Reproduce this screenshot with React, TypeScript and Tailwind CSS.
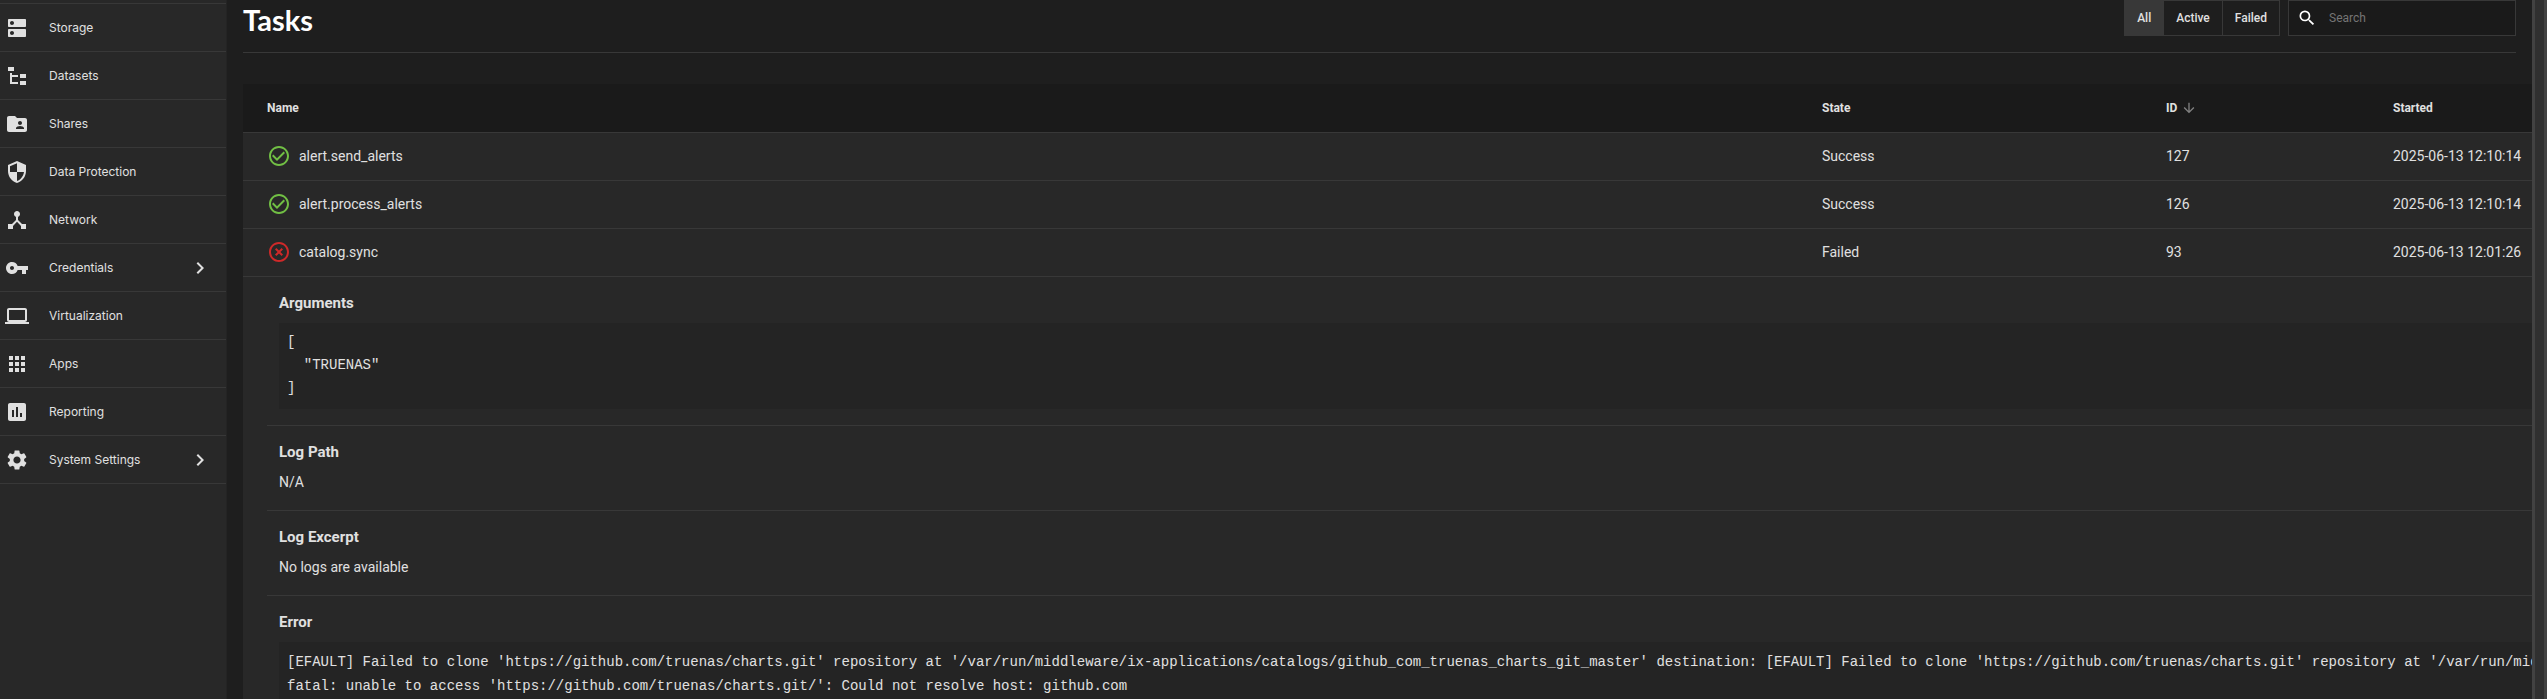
import { type ReactNode } from "react";
import {
  MdApps,
  MdArrowDownward,
  MdAssessment,
  MdCheckCircleOutline,
  MdChevronRight,
  MdDeviceHub,
  MdDns,
  MdFolderShared,
  MdHighlightOff,
  MdLaptop,
  MdSearch,
  MdSecurity,
  MdSettings,
  MdVpnKey,
} from "react-icons/md";

function FileTreeIcon() {
  return (
    <svg viewBox="0 0 24 24" className="size-6" fill="currentColor" aria-hidden="true">
      <path d="M3 3h6v4H3V3m12 7h6v4h-6v-4m0 7h6v4h-6v-4m-2-4H7v5h6v2H5V9h2v2h6v2z" />
    </svg>
  );
}

const menu: { label: string; icon: ReactNode; expandable?: boolean }[] = [
  { label: "Storage", icon: <MdDns className="size-6" /> },
  { label: "Datasets", icon: <FileTreeIcon /> },
  { label: "Shares", icon: <MdFolderShared className="size-6" /> },
  { label: "Data Protection", icon: <MdSecurity className="size-6" /> },
  { label: "Network", icon: <MdDeviceHub className="size-6" /> },
  { label: "Credentials", icon: <MdVpnKey className="size-6" />, expandable: true },
  { label: "Virtualization", icon: <MdLaptop className="size-6" /> },
  { label: "Apps", icon: <MdApps className="size-6" /> },
  { label: "Reporting", icon: <MdAssessment className="size-6" /> },
  { label: "System Settings", icon: <MdSettings className="size-6" />, expandable: true },
];

const tasks = [
  { name: "alert.send_alerts", state: "Success", id: 127, started: "2025-06-13 12:10:14" },
  { name: "alert.process_alerts", state: "Success", id: 126, started: "2025-06-13 12:10:14" },
  { name: "catalog.sync", state: "Failed", id: 93, started: "2025-06-13 12:01:26" },
];

const argumentsText = `[
  "TRUENAS"
]`;

const errorText = `[EFAULT] Failed to clone 'https://github.com/truenas/charts.git' repository at '/var/run/middleware/ix-applications/catalogs/github_com_truenas_charts_git_master' destination: [EFAULT] Failed to clone 'https://github.com/truenas/charts.git' repository at '/var/run/mid
fatal: unable to access 'https://github.com/truenas/charts.git/': Could not resolve host: github.com`;

function Sidebar() {
  return (
    <nav className="w-[227px] shrink-0 border-r border-[#242424] bg-[#282828] pt-[3px] font-['Inter',sans-serif] text-xs text-[#e0e0e0]">
      <ul className="border-b border-[#383838]">
        {menu.map((item) => (
          <li key={item.label} className="h-12 border-t border-[#383838]">
            <a href="#" className="flex h-full items-center pr-3.5 pl-[5px]">
              {item.icon}
              <span className="ml-5 grow">{item.label}</span>
              {item.expandable && <MdChevronRight className="size-6" />}
            </a>
          </li>
        ))}
      </ul>
    </nav>
  );
}

function Filters() {
  const base = "h-9 border-y border-r border-[#383838] px-3 text-xs font-medium";
  return (
    <div className="flex">
      <button className={`${base} border-l bg-[#383838]`}>All</button>
      <button className={base}>Active</button>
      <button className={base}>Failed</button>
    </div>
  );
}

function Section({ title, children }: { title: string; children: ReactNode }) {
  return (
    <section className="border-b border-[#383838] pt-4 pl-3">
      <h4 className="text-[15px] leading-5 font-bold">{title}</h4>
      {children}
    </section>
  );
}

function TaskTable() {
  return (
    <table className="w-full table-fixed border-collapse text-left text-sm">
      <colgroup>
        <col />
        <col className="w-[344px]" />
        <col className="w-[227px]" />
        <col className="w-[139px]" />
      </colgroup>
      <thead className="bg-[#1a1a1a] text-xs">
        <tr className="h-12 border-b border-[#383838]">
          <th className="pl-6 font-bold">Name</th>
          <th className="font-bold">State</th>
          <th className="font-bold">
            <span className="flex items-center gap-1">
              ID
              <MdArrowDownward className="size-4 text-[#808080]" />
            </span>
          </th>
          <th className="font-bold">Started</th>
        </tr>
      </thead>
      <tbody className="bg-[#282828]">
        {tasks.map((task) => (
          <tr key={task.id} className="h-12 border-b border-[#383838]">
            <td className="pl-6">
              <span className="flex items-center gap-2">
                {task.state === "Success" ? (
                  <MdCheckCircleOutline className="size-6 text-[#71bf44]" />
                ) : (
                  <MdHighlightOff className="size-6 text-[#ce2929]" />
                )}
                {task.name}
              </span>
            </td>
            <td>{task.state}</td>
            <td>{task.id}</td>
            <td className="whitespace-nowrap">{task.started}</td>
          </tr>
        ))}
        <tr>
          <td colSpan={4} className="overflow-hidden pl-6">
            <Section title="Arguments">
              <pre className="mt-2.5 mb-4 overflow-hidden bg-[#242424] px-2 pt-2 pb-[9px] font-['Liberation_Mono',monospace] text-sm leading-[23px]">
                {argumentsText}
              </pre>
            </Section>
            <Section title="Log Path">
              <p className="mt-2.5 mb-[18px] leading-5">N/A</p>
            </Section>
            <Section title="Log Excerpt">
              <p className="mt-2.5 mb-[18px] leading-5">No logs are available</p>
            </Section>
            <Section title="Error">
              <pre className="mt-2.5 overflow-hidden bg-[#242424] px-2 pt-2 pb-2 font-['Liberation_Mono',monospace] text-sm leading-6">
                {errorText}
              </pre>
            </Section>
          </td>
        </tr>
      </tbody>
    </table>
  );
}

export default function App() {
  return (
    <div className="flex h-screen overflow-hidden bg-[#1e1e1e] font-['Roboto',sans-serif] text-[#e0e0e0]">
      <Sidebar />
      <main className="min-w-0 grow overflow-hidden pl-4">
        <header className="mr-4 flex h-[53px] items-start border-b border-[#383838]">
          <h1 className="grow font-['Lato',sans-serif] text-[29px] leading-10 font-bold text-white">Tasks</h1>
          <Filters />
          <label className="ml-2 flex h-9 w-[228px] items-center border border-[#383838] bg-[#1a1a1a] pl-2">
            <MdSearch className="size-5 text-white" />
            <input
              type="text"
              aria-label="Search"
              placeholder="Search"
              className="ml-3 min-w-0 grow bg-transparent text-xs outline-none placeholder:text-[#757575]"
            />
          </label>
        </header>
        <div className="mt-[31px]">
          <TaskTable />
        </div>
      </main>
      <div className="w-[15px] shrink-0 border-x-3 border-[#424242] bg-[#303030]" />
    </div>
  );
}
